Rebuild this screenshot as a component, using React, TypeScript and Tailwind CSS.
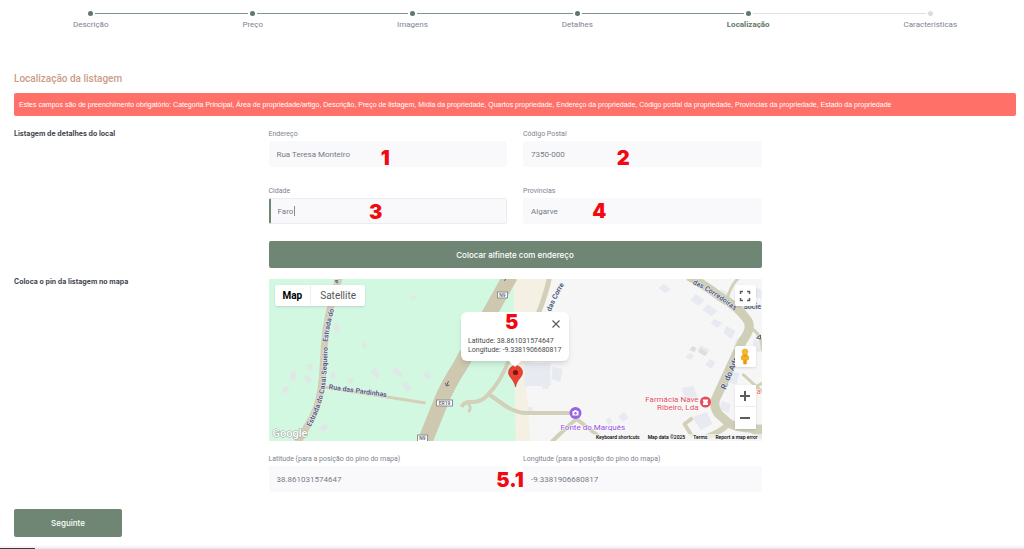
import { clsx } from "clsx";

const steps = [
  { label: "Descrição", state: "done" },
  { label: "Preço", state: "done" },
  { label: "Imagens", state: "done" },
  { label: "Detalhes", state: "done" },
  { label: "Localização", state: "current" },
  { label: "Características", state: "next" },
];

const Stepper = () => (
  <ol className="flex pl-1.5">
    {steps.map((step, i) => (
      <li key={step.label} className="flex flex-auto flex-col items-center">
        <div className="flex w-full items-center">
          <span
            className={clsx(
              "h-px flex-1",
              i === 0 ? "bg-transparent" : step.state === "next" ? "bg-[#e0e0e0]" : "bg-[#7f9686]"
            )}
          />
          <span
            className={clsx(
              "mx-0.5 size-[5px] rounded-full",
              step.state === "next" ? "bg-[#dddddd]" : "bg-[#5f7867]"
            )}
          />
          <span
            className={clsx(
              "h-px flex-1",
              step.state === "next" ? "bg-transparent" : step.state === "current" ? "bg-[#e0e0e0]" : "bg-[#7f9686]"
            )}
          />
        </div>
        <span
          className={clsx(
            "mt-1 text-[8px] leading-[10px]",
            step.state === "current" ? "font-bold text-[#5f7867]" : "text-[#7d8491]"
          )}
        >
          {step.label}
        </span>
      </li>
    ))}
  </ol>
);

const Mark = ({ children, className }: { children: string; className: string }) => (
  <span
    className={clsx(
      "pointer-events-none absolute -translate-x-1/2 font-[Inter,sans-serif] text-[20px] leading-5 font-black text-[#f20810]",
      className
    )}
  >
    {children}
  </span>
);

type FieldProps = {
  id: string;
  label: string;
  value: string;
  mark?: string;
  markClass?: string;
  active?: boolean;
};

const Field = ({ id, label, value, mark, markClass = "", active }: FieldProps) => (
  <div>
    <label htmlFor={id} className="block text-[7px] leading-[14px] text-[#7d838f]">
      {label}
    </label>
    <div className="relative">
      <input
        id={id}
        defaultValue={value}
        className={clsx(
          "block h-[26px] w-full rounded-xs bg-[#f9f9fb] text-[8px] text-[#747b86] outline-none",
          active ? "border border-l-2 border-[#ececef] border-l-[#6f8674] px-[7px]" : "px-2"
        )}
      />
      {active && <span className="absolute top-2 left-[25px] h-2.5 w-px bg-[#8b8f96]" />}
      {mark && <Mark className={markClass}>{mark}</Mark>}
    </div>
  </div>
);

const MapDrawing = () => (
  <svg
    viewBox="0 0 494 162"
    preserveAspectRatio="xMidYMid slice"
    className="absolute inset-0 size-full"
    aria-hidden="true"
  >
    <rect width="494" height="162" fill="#f6f6f7" />
    <path d="M0 0H280L268 36L262 84L258 110L262 162H0Z" fill="#f5f0e4" />
    <path d="M0 0H245L247 162H0Z" fill="#d3f8e2" />

    {/* buildings */}
    <path
      d="M64 46l5 -3 3 8 -5 3zM93 66l3 -3 3 3 -3 4zM21 94l6 -3 1 8 -6 3zM38 86l5 -2 2 6 -5 2zM34 98l5 -2 5 5 -4 4zM13 110l6 -3 2 4 -5 4zM62 94l4 -2 1 7 -4 1zM78 101l6 -2 2 4 -5 2zM102 93l5 -4 5 7 -4 4zM123 92l4 -4 7 6 -2 5zM133 105l6 -2 4 7 -5 3zM154 95l4 -3 5 5 -4 4zM51 149l6 -5 3 4 -5 5zM142 18l4 -2 2 3 -4 3z"
      fill="#e0e8e6"
    />
    <g fill="#e8eaf1">
      <path d="M256 84h26v23h-26zM284 88l10 2 -2 13 -9 -3zM259 128h5v6h-5zM274 102h6v8h-6z" />
      <path d="M395 5l7 5 -5 4 -7 -5zM427 15l9 6 -6 6 -8 -6zM439 25l10 7 -6 5 -9 -6zM452 10l8 4 -4 7 -7 -4zM446 40l8 4 -5 5 -7 -5zM458 47l9 5 -4 8 -8 -6zM432 66l9 5 -4 6 -8 -5zM441 80l6 3 -4 7 -6 -4zM421 74l5 3 -4 4 -5 -3zM413 109l12 -2 4 12 -11 6zM424 138l14 -5 6 12 -12 6zM350 137l6 -4 4 6 -6 4zM337 141l4 -3 3 5 -4 3zM462 92l9 2 -3 12 -9 -3zM468 60l8 3 -4 9 -7 -4zM453 122l9 3 -2 9 -9 -4zM485 8l8 3v9l-9 -3zM485 60l8 3v11l-9 -4z" />
    </g>
    <path d="M424 67l4 2 -2 4 -5 -2zM432 69l7 5 -3 3 -6 -4z" fill="#dedee1" />

    {/* minor roads */}
    <g fill="none" stroke="#d3d0b9" strokeLinejoin="round">
      <path d="M281 -2Q278 14 270 34" strokeWidth="5" />
      <path d="M241 80Q232 103 220 115Q214 123 204 123Q196 122 193 128" strokeWidth="4" />
      <path d="M199 124Q204 128 200 133" strokeWidth="3" />
      <path d="M220 115L237 127Q248 134 258 134H303" strokeWidth="4" />
      <path d="M283 163L302 145L308 140L330 157" strokeWidth="4" />
      <path d="M55 108L157 124" strokeWidth="3" />
      <path d="M470 -1Q461 8 459 20M484 50Q494 57 494 72M474 95L494 113M480 112L494 104" strokeWidth="3" />
      <path d="M424 139L416 145L424 158" strokeWidth="4" />
      <path d="M460 145Q452 153 438 158M482 150L494 158" strokeWidth="6" />
    </g>
    {/* main roads */}
    <g fill="none" strokeLinejoin="round">
      <path d="M242 -3L191 88Q178 108 172 124L155 166" stroke="#cfc8b0" strokeWidth="15" />
      <path d="M71 -2Q58 35 56 65L54 98Q52 122 44 138L29 164" stroke="#d3cdb5" strokeWidth="7" />
      <path d="M420 -3Q438 7 452 18Q470 28 478 40Q485 48 474 62L449 116Q443 126 450 135L460 144Q470 150 496 150" stroke="#cfcfb8" strokeWidth="9" />
    </g>

    {/* street names */}
    <defs>
      <path id="sequeiro" d="M42 148Q54 126 57 104Q59 84 59 66L60 50" />
      <path id="estrada" d="M59 63Q61 43 69 20" />
      <path id="top" d="M69 5L74 -8" />
      <path id="corre" d="M281 36Q288 16 304 -8" />
      <path id="corredoiras" d="M424 5Q448 15 482 45" />
      <path id="adro" d="M457 111L475 68" />
    </defs>
    <g fontSize="7" fontWeight="600" fill="#4d5577" stroke="#eef1f2" strokeWidth="1" paintOrder="stroke">
      <text><textPath href="#sequeiro">Estrada do Casal Sequeiro</textPath></text>
      <text><textPath href="#estrada">Estrada do</textPath></text>
      <text><textPath href="#top">a</textPath></text>
      <text><textPath href="#corre">: das Corre</textPath></text>
      <text><textPath href="#corredoiras">das Corredoiras</textPath></text>
      <text fontSize="8"><textPath href="#adro">R. do Adro</textPath></text>
      <text transform="translate(60 110) rotate(8)">Rua das Pardinhas</text>
      <text x="475" y="30">Socie</text>
    </g>

    {/* road shields */}
    <g fontSize="5" fontWeight="500" fill="#555b66" textAnchor="middle">
      <g stroke="#8a8f96" strokeWidth="1">
        <rect x="229" y="13" width="10" height="6" fill="#fff" />
        <rect x="168" y="121" width="16" height="6" fill="#fff" />
        <rect x="149" y="156" width="10" height="7" fill="#fff" />
      </g>
      <text x="234" y="18">N9</text>
      <text x="176" y="126">ER19</text>
      <text x="154" y="161">N9</text>
    </g>
    <path d="M236 2l2 -4M178 107l2 -5m-2 5l-1 -3m1 3l3 -1M488 59l4 -3v4z" stroke="#5f6470" fill="none" />

    {/* places */}
    <g fontSize="8" stroke="#fff" strokeWidth="1" paintOrder="stroke">
      <text x="292" y="151" fill="#8f4fdc">Fonte do Marquês</text>
      <g fill="#e24a56" textAnchor="end">
        <text x="430" y="123">Farmácia Nave</text>
        <text x="430" y="131">Ribeiro, Lda</text>
      </g>
      <text x="488" y="115" fill="#ee675c">a</text>
    </g>
    <circle cx="307" cy="134" r="6" fill="#9a62e4" />
    <path d="M304 132h1.5l.7 -1h1.6l.7 1h1.5v4.5h-6z" fill="#fff" />
    <circle cx="307" cy="134.2" r="1.2" fill="#9a62e4" />
    <circle cx="437" cy="123" r="5.5" fill="#e84c58" />
    <path d="M434.5 120.5h5v1.5l-.8 1 .8 1v2h-5v-2l.8 -1 -.8 -1z" fill="#fff" />

    <text x="4" y="158" fontSize="11" fontWeight="500" fill="#fff" stroke="#9aa5a0" strokeWidth="1" paintOrder="stroke">
      Google
    </text>

    {/* pin */}
    <path d="M247 108C246 101 240 98 240 93.5A7 7 0 0 1 254 93.5C254 98 248 101 247 108Z" fill="#ea4335" stroke="#c5221f" strokeWidth=".6" />
    <circle cx="247" cy="93.5" r="2.6" fill="#7f1512" />
  </svg>
);

const controlClass = "flex w-[21px] items-center justify-center bg-white text-[#5c5c5c]";

const ListingMap = () => (
  <div className="relative h-[162px] overflow-hidden">
    <MapDrawing />

    <div className="absolute top-1.5 left-1.5 flex rounded-xs bg-white text-[10px] leading-[21px] shadow-sm">
      <button type="button" className="border-r border-[#eee] px-2 font-bold text-black">Map</button>
      <button type="button" className="px-[9px] text-[#565656]">Satellite</button>
    </div>

    <button
      type="button"
      aria-label="Toggle fullscreen view"
      className={clsx(controlClass, "absolute top-1.5 right-1.5 h-[21px] rounded-xs shadow-sm")}
    >
      <svg viewBox="0 0 12 12" className="size-3" fill="none" stroke="currentColor" strokeWidth="1.5">
        <path d="M1.5 4V1.5H4M8 1.5h2.5V4M10.5 8v2.5H8M4 10.5H1.5V8" />
      </svg>
    </button>
    <div className="absolute right-1.5 bottom-3 flex flex-col gap-[18px]">
      <button type="button" aria-label="Street View" className={clsx(controlClass, "h-[21px] rounded-xs shadow-sm")}>
        <svg viewBox="0 0 12 18" className="h-[17px] w-3">
          <path d="M4 7Q1.5 8 2 12L4 12.5 4.5 17h3L8 12.5 10 12Q10.5 8 8 7Z" fill="#f5b21b" stroke="#d98f10" strokeWidth=".5" />
          <circle cx="6" cy="4" r="3" fill="#f8bb27" stroke="#d98f10" strokeWidth=".5" />
          <path d="M4.5 7.5L6 9l1.5 -1.5M6 12.5V17" fill="none" stroke="#c87b0c" strokeWidth=".8" />
        </svg>
      </button>
      <div className="flex flex-col rounded-xs bg-white shadow-sm">
        <button type="button" aria-label="Zoom in" className={clsx(controlClass, "h-[22px] border-b border-[#eee]")}>
          <svg viewBox="0 0 10 10" className="size-2.5" stroke="currentColor" strokeWidth="2">
            <path d="M0 5h10M5 0v10" />
          </svg>
        </button>
        <button type="button" aria-label="Zoom out" className={clsx(controlClass, "h-[22px]")}>
          <svg viewBox="0 0 10 10" className="size-2.5" stroke="currentColor" strokeWidth="2">
            <path d="M0 5h10" />
          </svg>
        </button>
      </div>
    </div>

    <div className="absolute top-[33px] left-1/2 w-[108px] -translate-x-1/2 rounded-md bg-white px-[7px] pt-2 pb-1.5 shadow-md">
      <div className="flex justify-end pr-0.5">
        <button type="button" aria-label="Close" className="text-[#5c5c5c]">
          <svg viewBox="0 0 8 8" className="size-2" stroke="currentColor" strokeWidth="1.2">
            <path d="M.5 .5l7 7M7.5 .5l-7 7" />
          </svg>
        </button>
      </div>
      <p className="mt-[9px] text-[7px] leading-[9px] whitespace-nowrap text-[#4c4c4c]">
        Latitude: 38.861031574647
        <br />
        Longitude: -9.3381906680817
      </p>
      <svg viewBox="0 0 12 6" className="absolute top-full left-1/2 h-1.5 w-3 -translate-x-1/2">
        <path d="M0 0h12L6 6z" fill="#fff" />
      </svg>
      <Mark className="top-0 left-[47%]">5</Mark>
    </div>

    <div className="absolute right-0 bottom-0 flex bg-[#f5f5f5]/70 text-[5px] leading-[7px] font-medium whitespace-nowrap text-black">
      <button type="button" className="px-1">Keyboard shortcuts</button>
      <span className="px-1">Map data ©2025</span>
      <a href="#terms" className="px-1">Terms</a>
      <a href="#report" className="px-1">Report a map error</a>
    </div>
  </div>
);

const headingClass = "font-[Inter,sans-serif] text-[7px] leading-[14px] font-bold text-[#42464f]";
const buttonClass = "rounded-xs bg-[#6f8674] font-[Inter,sans-serif] text-[8px] font-medium text-white";

const App = () => {
  return (
    <div className="relative min-h-screen bg-white pt-[11px] pb-2.5 font-[Roboto,sans-serif]">
      <Stepper />

      <form className="pt-[43px] pr-2 pl-3.5" onSubmit={(e) => e.preventDefault()}>
        <h1 className="text-[10px] leading-3 font-medium text-[#cc9c87]">Localização da listagem</h1>
        <p role="alert" className="mt-2 rounded-xs bg-[#ff7168] px-[5px] py-1.5 font-['Liberation_Sans',sans-serif] text-[7px] leading-[11px] text-white">
          Estes campos são de preenchimento obrigatório: Categoria Principal, Área de propriedade/artigo, Descrição, Preço de listagem, Mídia da propriedade, Quartos propriedade, Endereço da propriedade, Código postal da propriedade, Províncias da propriedade, Estado da propriedade
        </p>

        <section className="mt-[11px] grid grid-cols-4 gap-x-4">
          <h2 className={headingClass}>Listagem de detalhes do local</h2>
          <div className="col-span-2 grid grid-cols-2 gap-x-4 gap-y-[17px]">
            <Field id="endereco" label="Endereço" value="Rua Teresa Monteiro" mark="1" markClass="top-[7px] left-[49%]" />
            <Field id="postal" label="Código Postal" value="7350-000" mark="2" markClass="top-[7px] left-[42%]" />
            <Field id="cidade" label="Cidade" value="Faro" mark="3" markClass="top-1 left-[45%]" active />
            <Field id="provincias" label="Províncias" value="Algarve" mark="4" markClass="top-[3px] left-[32%]" />
            <button type="submit" className={clsx(buttonClass, "col-span-2 h-[27px]")}>
              Colocar alfinete com endereço
            </button>
          </div>
        </section>

        <section className="mt-[7px] grid grid-cols-4 gap-x-4">
          <h2 className={headingClass}>Coloca o pin da listagem no mapa</h2>
          <div className="col-span-2 pt-1">
            <ListingMap />
            <div className="relative mt-[11px] grid grid-cols-2 gap-x-4">
              <Field id="latitude" label="Latitude (para a posição do pino do mapa)" value="38.861031574647" />
              <Field id="longitude" label="Longitude (para a posição do pino do mapa)" value="-9.3381906680817" />
              <Mark className="top-[18px] left-[49%]">5.1</Mark>
            </div>
          </div>
        </section>

        <button type="button" className={clsx(buttonClass, "mt-[17px] h-7 w-[108px]")}>
          Seguinte
        </button>
      </form>

      <div className="absolute inset-x-0 bottom-0 flex h-1 items-end bg-linear-to-b from-white to-[#e8e8e8]">
        <div className="h-px w-[35px] bg-[#3c3c3c]" />
      </div>
    </div>
  );
};

export default App;
